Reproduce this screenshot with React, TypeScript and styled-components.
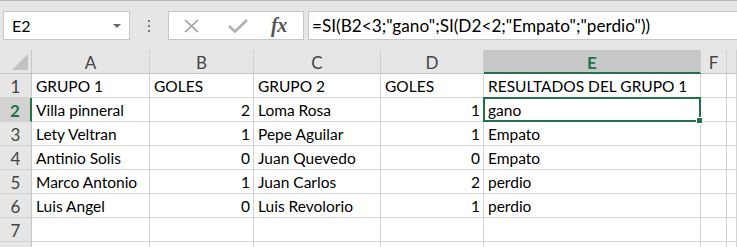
import React from "react";
import styled, { createGlobalStyle, css } from "styled-components";

const GREEN = "#217346";
const FONT = `"Lato", "Noto Sans", sans-serif`;

const Global = createGlobalStyle`
  html, body { margin: 0; padding: 0; background: #ffffff; }
  body { font-family: ${FONT}; overflow: hidden; }
  #root { width: 737px; height: 247px; overflow: hidden; }
`;

const Page = styled.div`
  width: 737px;
  height: 247px;
  overflow: hidden;
  display: flex;
  flex-direction: column;
`;

const Toolbar = styled.div`
  height: 50px;
  box-sizing: border-box;
  background: #e6e6e6;
  border-top: 1px solid #b8b8b8;
  padding: 10px 0 0 3px;
  display: flex;
  align-items: flex-start;
  flex-shrink: 0;
`;

const NameBox = styled.div`
  width: 127px;
  height: 29px;
  box-sizing: border-box;
  background: #fff;
  border: 1px solid #c6c6c6;
  display: flex;
  align-items: center;
  justify-content: space-between;
  padding: 0 8px 0 8px;
  font-size: 16px;
  color: #000;
`;

const Caret = styled.span`
  width: 0;
  height: 0;
  border-left: 4px solid transparent;
  border-right: 4px solid transparent;
  border-top: 4px solid #666;
  margin-top: 1px;
`;

const Dots = styled.div`
  width: 38px;
  height: 29px;
  display: flex;
  flex-direction: column;
  align-items: center;
  justify-content: center;
  gap: 3px;
  padding-right: 1px;
  box-sizing: border-box;
`;

const Dot = styled.span`
  width: 2px;
  height: 2px;
  background: #7a7a7a;
`;

const FxBox = styled.div`
  width: 136px;
  height: 29px;
  box-sizing: border-box;
  background: #fff;
  border: 1px solid #c6c6c6;
  display: flex;
  align-items: center;
  padding-left: 14px;
`;

const IconSlot = styled.div<{ $w: number }>`
  width: ${(p) => p.$w}px;
  height: 27px;
  display: flex;
  align-items: center;
  justify-content: flex-start;
`;

const FxText = styled.span`
  font-family: "Liberation Serif", "DejaVu Serif", serif;
  font-style: italic;
  font-weight: bold;
  font-size: 20px;
  color: #555;
  letter-spacing: -0.5px;
`;

const FormulaInput = styled.div`
  flex: 1;
  margin-left: 4px;
  height: 29px;
  box-sizing: border-box;
  background: #fff;
  border: 1px solid #c6c6c6;
  border-right: none;
  display: flex;
  align-items: center;
  padding-left: 3px;
  font-size: 17.2px;
  color: #000;
  white-space: nowrap;
`;

const COLS = [32, 118, 104, 127, 103, 217, 26];

const Grid = styled.div`
  display: grid;
  grid-template-columns: ${COLS.map((c) => c + "px").join(" ")} 1fr;
  grid-auto-rows: 24px;
`;

const headerBase = css`
  box-sizing: border-box;
  background: #e6e6e6;
  color: #444;
  font-size: 17px;
  display: flex;
  align-items: center;
  justify-content: center;
`;

const Corner = styled.div`
  ${headerBase};
  position: relative;
  border-right: 1px solid #c6c6c6;
  border-bottom: 1px solid #c6c6c6;
`;

const CornerTriangle = styled.span`
  position: absolute;
  right: 3px;
  bottom: 3px;
  width: 0;
  height: 0;
  border-left: 16px solid transparent;
  border-bottom: 16px solid #c2c2c2;
`;

const ColHeader = styled.div<{ $active?: boolean }>`
  ${headerBase};
  border-right: 1px solid #d0d0d0;
  border-bottom: 1px solid #c6c6c6;
  padding-top: 1px;
  ${(p) =>
    p.$active &&
    css`
      background: #c8c8c8;
      color: ${GREEN};
      font-weight: bold;
      border-bottom: 2px solid ${GREEN};
      padding-top: 2px;
    `}
`;

const RowHeader = styled.div<{ $active?: boolean }>`
  ${headerBase};
  border-right: 1px solid #c6c6c6;
  border-bottom: 1px solid #d0d0d0;
  padding-top: 1px;
  ${(p) =>
    p.$active &&
    css`
      background: #d2d2d2;
      color: ${GREEN};
      font-weight: bold;
      border-right: 2px solid ${GREEN};
    `}
`;

const Cell = styled.div<{ $num?: boolean; $selected?: boolean }>`
  box-sizing: border-box;
  border-right: 1px solid #d4d4d4;
  border-bottom: 1px solid #d4d4d4;
  font-size: 15.5px;
  color: #000;
  display: flex;
  align-items: center;
  padding: 1px 3px 0 4px;
  white-space: nowrap;
  position: relative;
  justify-content: ${(p) => (p.$num ? "flex-end" : "flex-start")};
  ${(p) =>
    p.$selected &&
    css`
      z-index: 2;
    `}
`;

const Selection = styled.span`
  position: absolute;
  left: -1px;
  top: -1px;
  right: -1px;
  bottom: -1px;
  border: 2px solid ${GREEN};
  pointer-events: none;
`;

const Handle = styled.span`
  position: absolute;
  right: -4px;
  bottom: -4px;
  width: 5px;
  height: 5px;
  background: ${GREEN};
  border: 1px solid #fff;
`;

const XIcon = () => (
  <svg width="17" height="14" viewBox="0 0 17 14">
    <path d="M2 1 L15 13 M15 1 L2 13" stroke="#9a9a9a" strokeWidth="1.6" fill="none" />
  </svg>
);

const CheckIcon = () => (
  <svg width="20" height="14" viewBox="0 0 20 14">
    <path d="M1 7 L7 12.5 L19 1" stroke="#b0b0b0" strokeWidth="2.6" fill="none" />
  </svg>
);

type Row = [string, string, string, string, string];
const ROWS: Row[] = [
  ["GRUPO 1", "GOLES", "GRUPO 2", "GOLES", "RESULTADOS DEL GRUPO 1"],
  ["Villa pinneral", "2", "Loma Rosa", "1", "gano"],
  ["Lety Veltran", "1", "Pepe Aguilar", "1", "Empato"],
  ["Antinio Solis", "0", "Juan Quevedo", "0", "Empato"],
  ["Marco Antonio", "1", "Juan Carlos", "2", "perdio"],
  ["Luis Angel", "0", "Luis Revolorio", "1", "perdio"],
];

const LETTERS = ["A", "B", "C", "D", "E", "F", ""];

export default function App() {
  const totalRows = 8;
  return (
    <Page>
      <Global />
      <Toolbar>
        <NameBox>
          <span>E2</span>
          <Caret />
        </NameBox>
        <Dots>
          <Dot />
          <Dot />
          <Dot />
        </Dots>
        <FxBox>
          <IconSlot $w={45}>
            <XIcon />
          </IconSlot>
          <IconSlot $w={43}>
            <CheckIcon />
          </IconSlot>
          <IconSlot $w={30}>
            <FxText>fx</FxText>
          </IconSlot>
        </FxBox>
        <FormulaInput>=SI(B2&lt;3;"gano";SI(D2&lt;2;"Empato";"perdio"))</FormulaInput>
      </Toolbar>
      <Grid>
        <Corner>
          <CornerTriangle />
        </Corner>
        {LETTERS.map((l, i) => (
          <ColHeader key={i} $active={l === "E"}>
            {l}
          </ColHeader>
        ))}
        {Array.from({ length: totalRows }).map((_, r) => {
          const data = ROWS[r];
          const rowNum = r + 1;
          return (
            <React.Fragment key={r}>
              <RowHeader $active={rowNum === 2}>{rowNum <= 7 ? rowNum : ""}</RowHeader>
              {Array.from({ length: 7 }).map((__, c) => {
                const val = data && c < 5 ? data[c] : "";
                const isNum = r > 0 && (c === 1 || c === 3);
                const sel = rowNum === 2 && c === 4;
                return (
                  <Cell key={c} $num={isNum} $selected={sel}>
                    {val}
                    {sel && (
                      <Selection>
                        <Handle />
                      </Selection>
                    )}
                  </Cell>
                );
              })}
            </React.Fragment>
          );
        })}
      </Grid>
    </Page>
  );
}
